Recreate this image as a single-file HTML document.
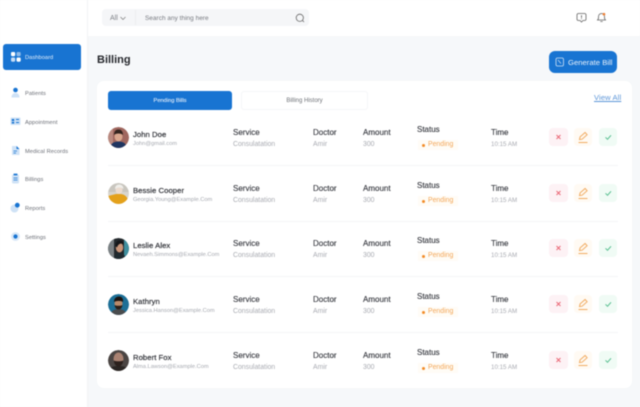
<!DOCTYPE html>
<html><head><meta charset="utf-8"><style>
*{box-sizing:border-box;margin:0;padding:0}
html,body{width:640px;height:407px;overflow:hidden;background:#f6f8fa;font-family:"Liberation Sans",sans-serif}
.a{position:absolute;white-space:nowrap}
#wrap{position:absolute;left:0;top:0;width:640px;height:407px;filter:blur(.45px)}
.nav{position:absolute;left:25px;font-size:5.700px;color:#6d7078;line-height:8px;letter-spacing:.05px}
.ic{position:absolute;left:10px}
.row{position:absolute;left:0;width:640px;height:56px}
.row .av{position:absolute;left:108px;top:4.500px;width:21px;height:21px;border-radius:50%}
.nm{position:absolute;left:133px;top:8px;font-size:7.700px;line-height:10px;color:#2f3137;letter-spacing:.05px;white-space:nowrap;-webkit-text-stroke:.18px #2f3137}
.em{position:absolute;left:133px;top:18px;font-size:5.700px;line-height:8px;color:#a6a9b0;white-space:nowrap}
.h{position:absolute;top:6px;font-size:8px;line-height:10px;color:#33353c;white-space:nowrap;-webkit-text-stroke:.12px #33353c}
.s{position:absolute;top:18px;font-size:6.900px;line-height:10px;color:#a9abb2;white-space:nowrap}
.pd{position:absolute;left:418px;top:18px;width:40px;height:10px;font-size:6.900px;line-height:10px;color:#f3a75a;padding-left:10px;background:#fffcf6}
.pd:before{content:"";position:absolute;left:3.500px;top:3.500px;width:3px;height:3px;border-radius:50%;background:#f28c28}
.b{position:absolute;top:6px;height:18px;border-radius:4px}
.b svg{position:absolute;left:0;top:0}
.x{left:548.500px;width:19px;background:#fdf2f5}
.e{left:574px;width:18px;background:#fffaf3}
.c{left:599px;width:18px;background:#f0fbf5}
.ln{position:absolute;left:108px;top:43px;width:510px;height:1px;background:#f4f5f7}
</style></head><body><div id="wrap">

<div class="a" style="left:0;top:0;width:88px;height:407px;background:#fff;border-right:1px solid #f2f3f5"></div>
<div class="a" style="left:88px;top:0;width:552px;height:36px;background:#fff"></div>

<div class="a" style="left:102px;top:9px;width:207px;height:17px;background:#f5f6f8;border-radius:4px"></div>
<div class="a" style="left:135px;top:10px;width:1px;height:15px;background:#eceef0"></div>
<div class="a" style="left:110px;top:14.500px;font-size:7px;line-height:8px;color:#7e8187">All</div>
<svg class="a" style="left:120px;top:16px" width="6" height="5" viewBox="0 0 6 5"><path d="M.5 1l2.500 2.500L5.500 1" fill="none" stroke="#777" stroke-width=".7"/></svg>
<div class="a" style="left:145px;top:14.500px;font-size:6.400px;line-height:8px;color:#777a80;letter-spacing:.05px">Search any thing here</div>
<svg class="a" style="left:295px;top:13px" width="10" height="10" viewBox="0 0 10 10"><circle cx="4.800" cy="4.800" r="3.600" fill="none" stroke="#666" stroke-width=".8"/><path d="M7.500 7.500L9 9" stroke="#666" stroke-width=".8"/></svg>

<svg class="a" style="left:576px;top:12px" width="11" height="11" viewBox="0 0 11 11"><path d="M2.500 1.500h6a1.500 1.500 0 0 1 1.500 1.500v4a1.500 1.500 0 0 1-1.500 1.500H7L5.500 10 4 8.500H2.500A1.500 1.500 0 0 1 1 7V3a1.500 1.500 0 0 1 1.500-1.500z" fill="none" stroke="#666" stroke-width=".8"/><path d="M5.500 3.200v2.600M5.500 6.400v.7" stroke="#555" stroke-width=".8"/></svg>
<svg class="a" style="left:596px;top:12px" width="11" height="11" viewBox="0 0 11 11"><path d="M5.500 1.500a3 3 0 0 0-3 3v2L1.500 8h8l-1-1.500v-2a3 3 0 0 0-3-3zM4.300 9.500h2.400" fill="none" stroke="#666" stroke-width=".8"/><circle cx="8" cy="2.200" r="1.300" fill="#ee7f33"/></svg>

<div class="a" style="left:3px;top:44px;width:78px;height:26px;background:#1874d2;border-radius:3px"></div>
<svg class="a" style="left:11px;top:52px" width="10" height="10" viewBox="0 0 10 10"><rect x="0" y="0" width="4.200" height="4.200" rx="1.200" fill="#fff"/><rect x="5.500" y="0" width="4.200" height="4.200" rx="1.200" fill="#8db9e8"/><rect x="0" y="5.500" width="4.200" height="4.200" rx="1.200" fill="#c5dcf5"/><rect x="5.500" y="5.500" width="4.200" height="4.200" rx="1.200" fill="#fff"/></svg>
<div class="a" style="left:25px;top:54px;font-size:5.700px;line-height:8px;color:#e6f0fb;letter-spacing:.05px">Dashboard</div>

<svg class="ic" style="top:87px" width="11" height="11" viewBox="0 0 11 11"><circle cx="5.500" cy="3" r="2.300" fill="#1874d2"/><path d="M1.500 10.500c0-3 1.800-4.500 4-4.500s4 1.500 4 4.500z" fill="#cfe2f6"/></svg>
<div class="nav" style="top:90px">Patients</div>
<svg class="ic" style="top:116px" width="11" height="11" viewBox="0 0 11 11"><rect x=".5" y="1.500" width="10" height="7.500" rx="1" fill="#cfe2f6"/><rect x="1.800" y="3" width="2.400" height="2" fill="#1874d2"/><rect x="1.800" y="5.800" width="2.400" height="1.800" fill="#1874d2"/><path d="M6 3.500h3M6 6.500h3" stroke="#1874d2" stroke-width=".9"/></svg>
<div class="nav" style="top:119px">Appointment</div>
<svg class="ic" style="top:145px" width="11" height="11" viewBox="0 0 11 11"><path d="M2 1h4.500l3 3v6H2z" fill="#cfe2f6"/><path d="M6.500 1l3 3h-3z" fill="#1874d2"/><path d="M3.500 6h3.500M3.500 8h2.500" stroke="#1874d2" stroke-width=".7"/></svg>
<div class="nav" style="top:148px">Medical Records</div>
<svg class="ic" style="top:173px" width="11" height="11" viewBox="0 0 11 11"><rect x="2" y="1.500" width="7" height="9" rx="1.200" fill="#cfe2f6"/><rect x="3.500" y=".6" width="4" height="1.800" rx=".6" fill="#1874d2"/><path d="M3.500 5h4M3.500 7h4" stroke="#1874d2" stroke-width=".7"/></svg>
<div class="nav" style="top:176px">Billings</div>
<svg class="ic" style="top:202px" width="11" height="11" viewBox="0 0 11 11"><circle cx="4.500" cy="6.500" r="4" fill="#cfe2f6"/><circle cx="7.300" cy="3.200" r="2.400" fill="#1874d2"/></svg>
<div class="nav" style="top:205px">Reports</div>
<svg class="ic" style="top:231px" width="11" height="11" viewBox="0 0 11 11"><circle cx="5.500" cy="5.500" r="4.400" fill="#d8e7f7"/><circle cx="5.500" cy="5.500" r="2.100" fill="#1874d2"/></svg>
<div class="nav" style="top:234px">Settings</div>

<div class="a" style="left:97px;top:53px;font-size:11px;line-height:14px;font-weight:700;color:#24262b">Billing</div>

<div class="a" style="left:549px;top:51px;width:68px;height:22px;background:#1874d2;border-radius:6px"></div>
<svg class="a" style="left:555px;top:57px" width="10" height="10" viewBox="0 0 10 10"><rect x="1" y="1" width="7.500" height="8" rx="1.500" fill="none" stroke="#cfe2f6" stroke-width=".8"/><path d="M3 3l3 3.500" stroke="#cfe2f6" stroke-width=".7"/></svg>
<div class="a" style="left:568px;top:58px;font-size:7.700px;line-height:10px;color:#e8f1fb">Generate Bill</div>

<div class="a" style="left:97px;top:81px;width:535px;height:307px;background:#fff;border-radius:7px"></div>

<div class="a" style="left:108px;top:91px;width:124px;height:19px;background:#1874d2;border-radius:3px"></div>
<div class="a" style="left:108px;top:96.500px;width:124px;text-align:center;font-size:5.700px;line-height:8px;color:#e2edfa;-webkit-text-stroke:.1px #e2edfa">Pending Bills</div>
<div class="a" style="left:241px;top:91px;width:127px;height:19px;background:#fff;border:1px solid #f5f6f8;border-radius:3px"></div>
<div class="a" style="left:241px;top:96.500px;width:127px;text-align:center;font-size:6px;line-height:8px;color:#6f7278">Billing History</div>
<div class="a" style="left:594px;top:93px;font-size:7.600px;line-height:9px;color:#5d96d8;text-decoration:underline;letter-spacing:.1px">View All</div>

<!-- row 1 -->
<div class="row" style="top:122px">
<svg class="av" viewBox="0 0 21 21"><defs><clipPath id="c1"><circle cx="10.500" cy="10.500" r="10.500"/></clipPath></defs><g clip-path="url(#c1)"><rect width="21" height="21" fill="#a0675f"/><rect x="0" y="0" width="5" height="21" fill="#b98a80"/><path d="M2 21c1-5 4-6.500 8.500-6.500S18 16 19 21z" fill="#1f3560"/><ellipse cx="10.500" cy="9.500" rx="4" ry="5" fill="#d9a78f"/><path d="M6 8c0-4 2-5.500 4.500-5.500S15 4 15 8c-2-2-7-2-9 0z" fill="#33241f"/></g></svg>
<div class="nm">John Doe</div><div class="em">John@gmail.com</div>
<div class="h" style="left:233px">Service</div><div class="s" style="left:233px">Consulatation</div>
<div class="h" style="left:313px">Doctor</div><div class="s" style="left:313px">Amir</div>
<div class="h" style="left:363px">Amount</div><div class="s" style="left:363px">300</div>
<div class="h" style="left:417px;top:3px">Status</div><div class="pd">Pending</div>
<div class="h" style="left:491px">Time</div><div class="s" style="left:491px;font-size:6.200px">10:15 AM</div>
<div class="b x"><svg width="19" height="18"><path d="M7.500 7l4 4M11.500 7l-4 4" stroke="#ea6b78" stroke-width="1"/></svg></div>
<div class="b e"><svg width="18" height="18" viewBox="0 0 18 18"><path d="M5.500 11.500l.6-2.600 5-4.400 2 2.200-5 4.500zM4.500 14.500h9" fill="none" stroke="#f1ac62" stroke-width="1"/></svg></div>
<div class="b c"><svg width="18" height="18"><path d="M6.500 9.300l2 2 3.500-4" fill="none" stroke="#55bd8e" stroke-width="1"/></svg></div>
<div class="ln"></div>
</div>

<!-- row 2 -->
<div class="row" style="top:178px">
<svg class="av" viewBox="0 0 21 21"><defs><clipPath id="c2"><circle cx="10.500" cy="10.500" r="10.500"/></clipPath></defs><g clip-path="url(#c2)"><rect width="21" height="21" fill="#d8d5ce"/><rect y="0" width="21" height="9" fill="#c9c6bf"/><path d="M0 13l8-2 3 0c4 0 9 1 10 10H4z" fill="#e4a11b"/><ellipse cx="11" cy="7" rx="3.500" ry="4" fill="#ecdcd0"/><path d="M7 6c0-3 2-4.500 4-4.500s4.500 1 4.500 4.500c-2-2-6-2-8.500 0z" fill="#efeeea"/></g></svg>
<div class="nm">Bessie Cooper</div><div class="em">Georgia.Young@Example.Com</div>
<div class="h" style="left:233px">Service</div><div class="s" style="left:233px">Consulatation</div>
<div class="h" style="left:313px">Doctor</div><div class="s" style="left:313px">Amir</div>
<div class="h" style="left:363px">Amount</div><div class="s" style="left:363px">300</div>
<div class="h" style="left:417px;top:3px">Status</div><div class="pd">Pending</div>
<div class="h" style="left:491px">Time</div><div class="s" style="left:491px;font-size:6.200px">10:15 AM</div>
<div class="b x"><svg width="19" height="18"><path d="M7.500 7l4 4M11.500 7l-4 4" stroke="#ea6b78" stroke-width="1"/></svg></div>
<div class="b e"><svg width="18" height="18" viewBox="0 0 18 18"><path d="M5.500 11.500l.6-2.600 5-4.400 2 2.200-5 4.500zM4.500 14.500h9" fill="none" stroke="#f1ac62" stroke-width="1"/></svg></div>
<div class="b c"><svg width="18" height="18"><path d="M6.500 9.300l2 2 3.500-4" fill="none" stroke="#55bd8e" stroke-width="1"/></svg></div>
<div class="ln" style="top:42.500px"></div>
</div>

<!-- row 3 -->
<div class="row" style="top:233px">
<svg class="av" viewBox="0 0 21 21"><defs><clipPath id="c3"><circle cx="10.500" cy="10.500" r="10.500"/></clipPath></defs><g clip-path="url(#c3)"><rect width="21" height="21" fill="#23282c"/><rect x="0" width="6" height="21" fill="#7b8184"/><rect x="16" width="5" height="21" fill="#3f8f9e"/><path d="M6 21c1-4 3-6 6-6s5 2 6 6z" fill="#1f2a30"/><ellipse cx="11.500" cy="9.500" rx="3.700" ry="5" fill="#c8957a"/><path d="M7.500 8c0-4 2-5.500 4.500-5.500 2.500 0 4 1.500 3.500 4-2-1.500-5-1.500-6.500 3z" fill="#15171a"/></g></svg>
<div class="nm">Leslie Alex</div><div class="em">Nevaeh.Simmons@Example.Com</div>
<div class="h" style="left:233px">Service</div><div class="s" style="left:233px">Consulatation</div>
<div class="h" style="left:313px">Doctor</div><div class="s" style="left:313px">Amir</div>
<div class="h" style="left:363px">Amount</div><div class="s" style="left:363px">300</div>
<div class="h" style="left:417px;top:3px">Status</div><div class="pd">Pending</div>
<div class="h" style="left:491px">Time</div><div class="s" style="left:491px;font-size:6.200px">10:15 AM</div>
<div class="b x"><svg width="19" height="18"><path d="M7.500 7l4 4M11.500 7l-4 4" stroke="#ea6b78" stroke-width="1"/></svg></div>
<div class="b e"><svg width="18" height="18" viewBox="0 0 18 18"><path d="M5.500 11.500l.6-2.600 5-4.400 2 2.200-5 4.500zM4.500 14.500h9" fill="none" stroke="#f1ac62" stroke-width="1"/></svg></div>
<div class="b c"><svg width="18" height="18"><path d="M6.500 9.300l2 2 3.500-4" fill="none" stroke="#55bd8e" stroke-width="1"/></svg></div>
<div class="ln"></div>
</div>

<!-- row 4 -->
<div class="row" style="top:289px">
<svg class="av" viewBox="0 0 21 21"><defs><clipPath id="c4"><circle cx="10.500" cy="10.500" r="10.500"/></clipPath></defs><g clip-path="url(#c4)"><rect width="21" height="21" fill="#1d6f96"/><path d="M2 21c1-4 4-6 8.500-6s7.500 2 8.500 6z" fill="#4a4c4e"/><ellipse cx="10.500" cy="9.500" rx="4" ry="5" fill="#b98a6a"/><path d="M6.500 11c.5 3 2 4.500 4 4.500s3.500-1.500 4-4.500c-2 1-6 1-8 0z" fill="#2a1f18"/><path d="M6 8c0-3.500 2-5.500 5-5.500s4.500 2 4 5.500c-2.500-1.500-6-1.500-9 0z" fill="#1b1512"/></g></svg>
<div class="nm">Kathryn</div><div class="em">Jessica.Hanson@Example.Com</div>
<div class="h" style="left:233px">Service</div><div class="s" style="left:233px">Consulatation</div>
<div class="h" style="left:313px">Doctor</div><div class="s" style="left:313px">Amir</div>
<div class="h" style="left:363px">Amount</div><div class="s" style="left:363px">300</div>
<div class="h" style="left:417px;top:3px">Status</div><div class="pd">Pending</div>
<div class="h" style="left:491px">Time</div><div class="s" style="left:491px;font-size:6.200px">10:15 AM</div>
<div class="b x"><svg width="19" height="18"><path d="M7.500 7l4 4M11.500 7l-4 4" stroke="#ea6b78" stroke-width="1"/></svg></div>
<div class="b e"><svg width="18" height="18" viewBox="0 0 18 18"><path d="M5.500 11.500l.6-2.600 5-4.400 2 2.200-5 4.500zM4.500 14.500h9" fill="none" stroke="#f1ac62" stroke-width="1"/></svg></div>
<div class="b c"><svg width="18" height="18"><path d="M6.500 9.300l2 2 3.500-4" fill="none" stroke="#55bd8e" stroke-width="1"/></svg></div>
<div class="ln"></div>
</div>

<!-- row 5 -->
<div class="row" style="top:345px">
<svg class="av" viewBox="0 0 21 21"><defs><clipPath id="c5"><circle cx="10.500" cy="10.500" r="10.500"/></clipPath></defs><g clip-path="url(#c5)"><rect width="21" height="21" fill="#4b4543"/><path d="M1 21c1-4 4-5 9.500-5s8.500 1 9.500 5z" fill="#2a2523"/><ellipse cx="10.500" cy="9" rx="5" ry="6.500" fill="#a98272"/><path d="M5.700 10.500c.5 4 2.500 6 4.800 6s4.300-2 4.800-6c-2.500 1-7 1-9.600 0z" fill="#2c211d"/></g></svg>
<div class="nm">Robert Fox</div><div class="em">Alma.Lawson@Example.Com</div>
<div class="h" style="left:233px">Service</div><div class="s" style="left:233px">Consulatation</div>
<div class="h" style="left:313px">Doctor</div><div class="s" style="left:313px">Amir</div>
<div class="h" style="left:363px">Amount</div><div class="s" style="left:363px">300</div>
<div class="h" style="left:417px;top:3px">Status</div><div class="pd">Pending</div>
<div class="h" style="left:491px">Time</div><div class="s" style="left:491px;font-size:6.200px">10:15 AM</div>
<div class="b x"><svg width="19" height="18"><path d="M7.500 7l4 4M11.500 7l-4 4" stroke="#ea6b78" stroke-width="1"/></svg></div>
<div class="b e"><svg width="18" height="18" viewBox="0 0 18 18"><path d="M5.500 11.500l.6-2.600 5-4.400 2 2.200-5 4.500zM4.500 14.500h9" fill="none" stroke="#f1ac62" stroke-width="1"/></svg></div>
<div class="b c"><svg width="18" height="18"><path d="M6.500 9.300l2 2 3.500-4" fill="none" stroke="#55bd8e" stroke-width="1"/></svg></div>
</div>

</div></body></html>
